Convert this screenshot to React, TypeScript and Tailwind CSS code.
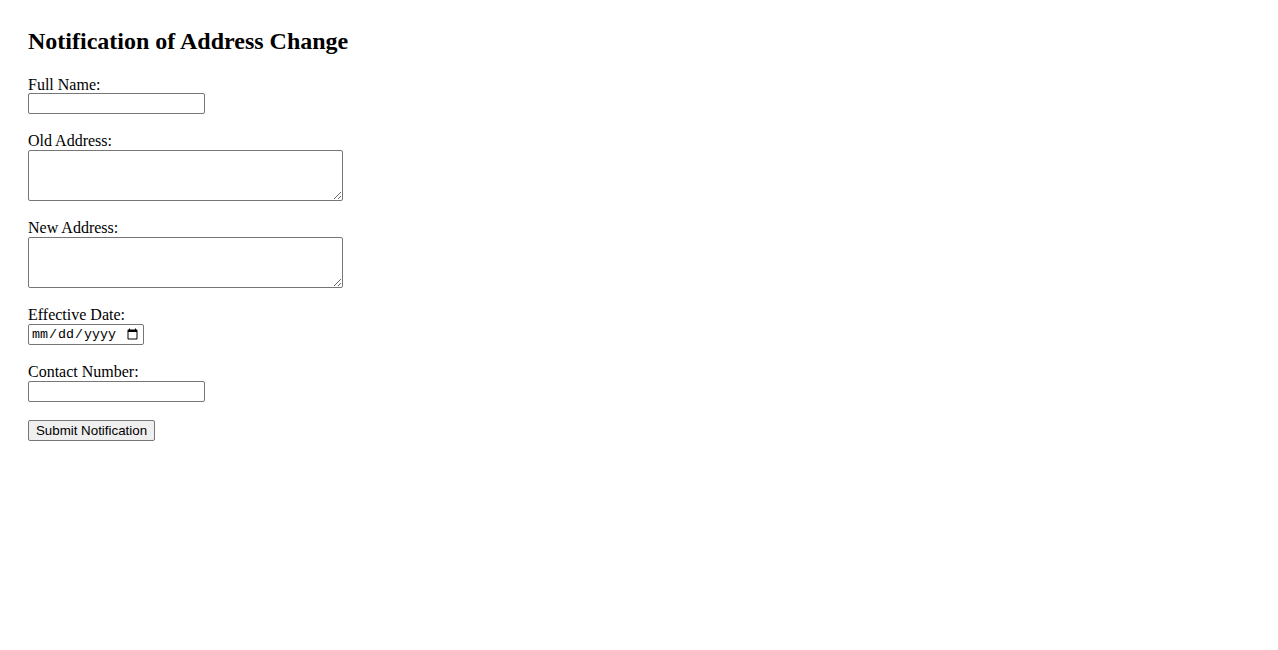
export default function App() {
  const field =
    "border border-[#767676] rounded-[2px] bg-white px-[2px] py-[1px] text-[13.33px] font-['Liberation_Sans',Arial,sans-serif]";

  return (
    <div className="min-h-screen bg-white pl-[28px] pt-[28px] text-black font-['Liberation_Serif','Times_New_Roman',serif]">
      <h2 className="text-[24px] font-bold leading-[27px]">Notification of Address Change</h2>

      <form className="mt-[21px] flex flex-col items-start" onSubmit={(e) => e.preventDefault()}>
        <div className="mb-[18px] flex flex-col items-start">
          <label htmlFor="fullName" className="block text-[16px] leading-[17px]">
            Full Name:
          </label>
          <input id="fullName" type="text" className={`${field} h-[21px] w-[177px]`} />
        </div>

        <div className="mb-[17px] flex flex-col items-start">
          <label htmlFor="oldAddress" className="block text-[16px] leading-[18px]">
            Old Address:
          </label>
          <textarea id="oldAddress" className={`${field} h-[51px] w-[315px] resize`} />
        </div>

        <div className="mb-[17px] flex flex-col items-start">
          <label htmlFor="newAddress" className="block text-[16px] leading-[19px]">
            New Address:
          </label>
          <textarea id="newAddress" className={`${field} h-[51px] w-[315px] resize`} />
        </div>

        <div className="mb-[17px] flex flex-col items-start">
          <label htmlFor="effectiveDate" className="block text-[16px] leading-[19px]">
            Effective Date:
          </label>
          <input
            id="effectiveDate"
            type="date"
            className="h-[21px] w-[116px] rounded-[2px] border border-[#767676] bg-white px-[2px] py-[1px] text-[13.33px] font-['Liberation_Mono',monospace]"
          />
        </div>

        <div className="mb-[18px] flex flex-col items-start">
          <label htmlFor="contact" className="block text-[16px] leading-[19px]">
            Contact Number:
          </label>
          <input id="contact" type="tel" className={`${field} h-[21px] w-[177px]`} />
        </div>

        <button
          type="submit"
          className="h-[21px] w-[127px] rounded-[2px] border border-[#767676] bg-[#efefef] px-[6px] text-[13.33px] leading-none text-black font-['Liberation_Sans',Arial,sans-serif]"
        >
          Submit Notification
        </button>
      </form>
    </div>
  );
}
